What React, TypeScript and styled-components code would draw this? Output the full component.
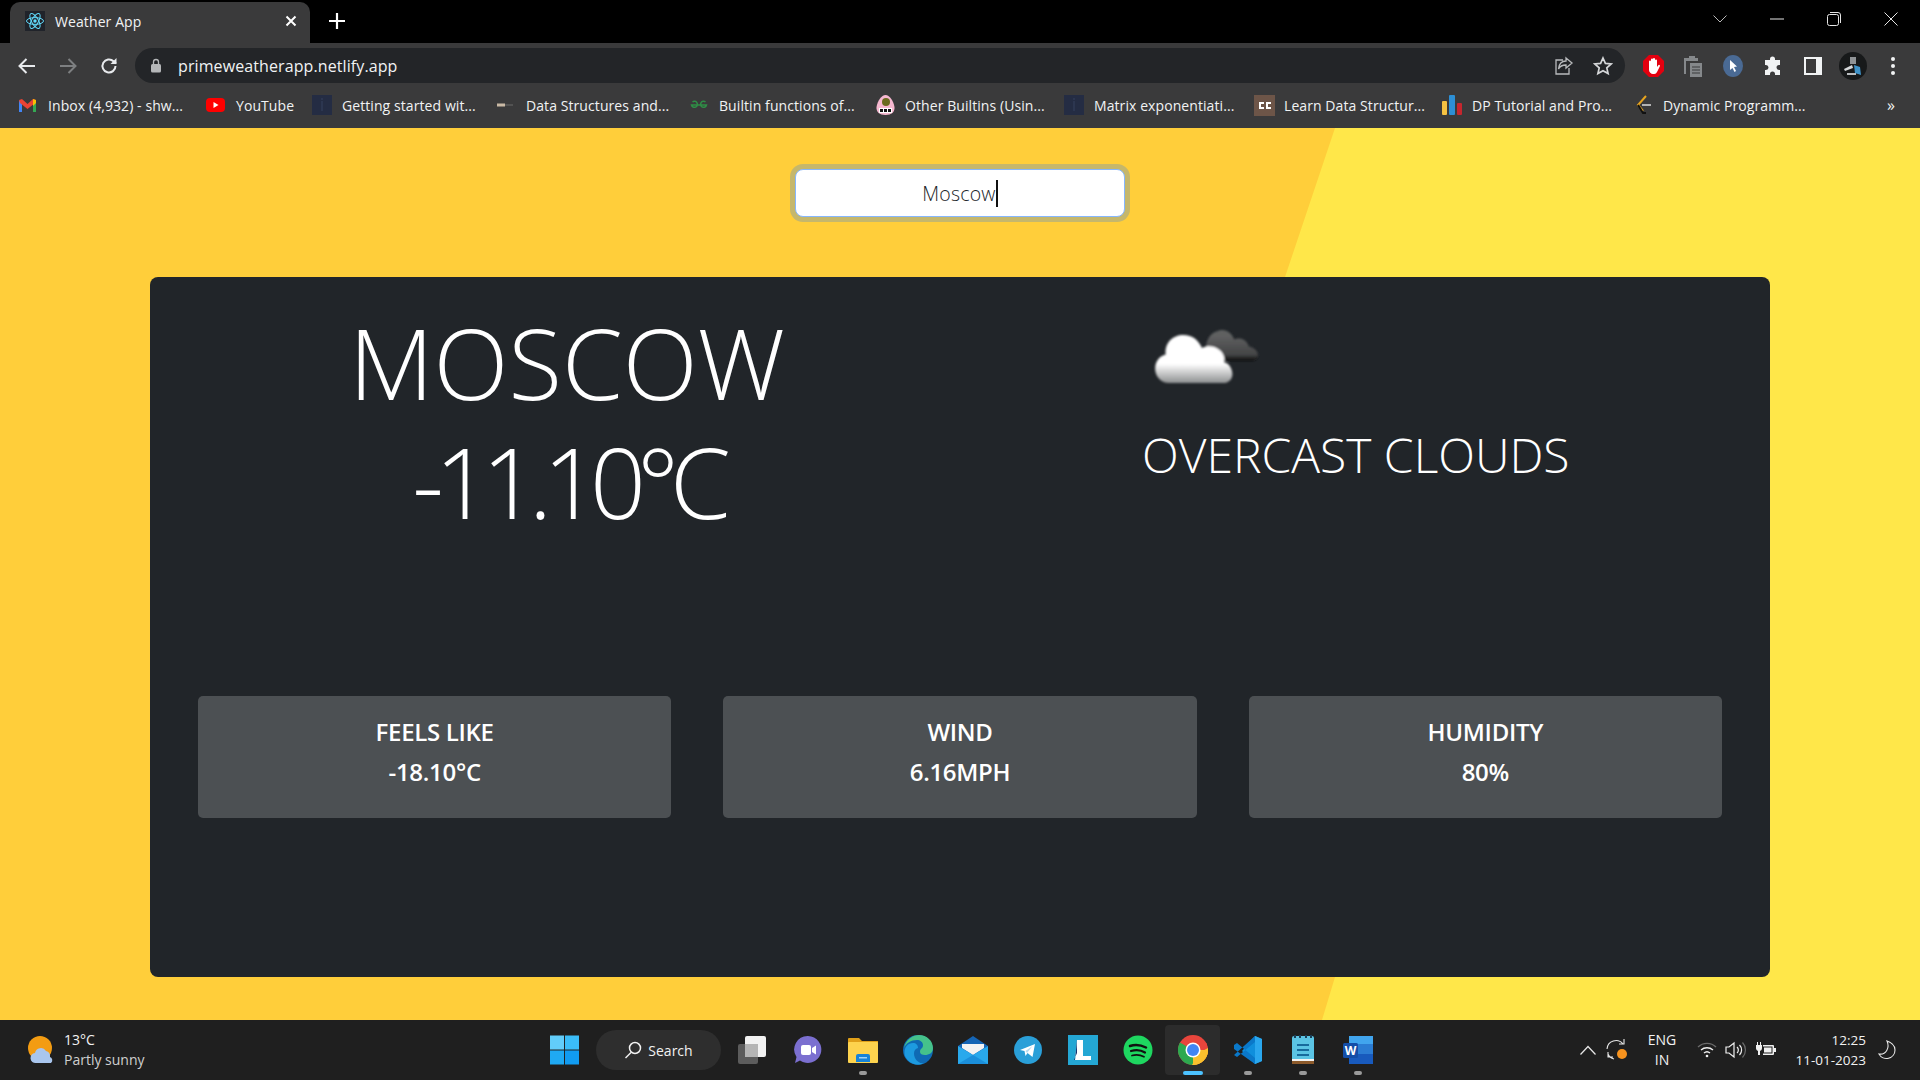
import React from 'react';
import styled, { createGlobalStyle } from 'styled-components';

const GlobalStyle = createGlobalStyle`
	html, body {
		margin: 0;
		padding: 0;
		background: #000;
		overflow: hidden;
	}
	* {
		box-sizing: border-box;
	}
`;

const bookmarks = [
	{ title: 'Inbox (4,932) - shw...', width: 188, icon: 'gmail' },
	{ title: 'YouTube', width: 106, icon: 'youtube' },
	{ title: 'Getting started wit...', width: 184, icon: 'doc' },
	{ title: 'Data Structures and...', width: 193, icon: 'dash' },
	{ title: 'Builtin functions of...', width: 186, icon: 'gfg' },
	{ title: 'Other Builtins (Usin...', width: 189, icon: 'gcc' },
	{ title: 'Matrix exponentiati...', width: 190, icon: 'doc' },
	{ title: 'Learn Data Structur...', width: 188, icon: 'cc' },
	{ title: 'DP Tutorial and Pro...', width: 191, icon: 'bars' },
	{ title: 'Dynamic Programm...', width: 220, icon: 'leet' },
];

const stats = [
	{ label: 'FEELS LIKE', value: '-18.10°C' },
	{ label: 'WIND', value: '6.16MPH' },
	{ label: 'HUMIDITY', value: '80%' },
];

const BookmarkIcon = ({ name }: { name: string }) => {
	switch (name) {
		case 'gmail':
			return (
				<svg width="19" height="16" viewBox="0 0 19 16">
					<path d="M1 3v12h3V6z" fill="#4285f4" />
					<path d="M18 3v12h-3V6z" fill="#34a853" />
					<path d="M1 3l3-1 5.5 5L15 2l3 1-1 3-7.500 6L2 6z" fill="#ea4335" />
					<path d="M15 2l3 1v3l-3 3z" fill="#fbbc04" />
				</svg>
			);
		case 'youtube':
			return (
				<svg width="19" height="16" viewBox="0 0 19 16">
					<rect y="1" width="19" height="14" rx="4" fill="#f00" />
					<path d="M7.500 5v6l5-3z" fill="#fff" />
				</svg>
			);
		case 'doc':
			return (
				<svg width="20" height="20" viewBox="0 0 20 20">
					<rect width="20" height="20" fill="#242c43" />
					<path d="M9 6h2v10H9zM9 3h2v2H9z" fill="#2c3650" />
				</svg>
			);
		case 'dash':
			return (
				<svg width="18" height="8" viewBox="0 0 18 8">
					<rect x="1" y="2.500" width="8" height="3" fill="#c9b9a5" />
					<rect x="9" y="3.500" width="8" height="1" fill="#6a6a6a" />
				</svg>
			);
		case 'gfg':
			return (
				<svg width="20" height="12" viewBox="0 0 20 12" fill="none" stroke="#2f8d46" strokeWidth="1.500">
					<path d="M10 6H2.500a3 3 0 1 0 1-3M10 6h7.500a3 3 0 1 1-1-3" />
				</svg>
			);
		case 'gcc':
			return (
				<svg width="21" height="22" viewBox="0 0 21 22">
					<path d="M10.500 1c4 0 8 6 9 12 .5 5-3 8-9 8s-9.500-3-9-8c1-6 5-12 9-12z" fill="#f6b8d0" />
					<circle cx="11" cy="8" r="4" fill="#6b6a1e" />
					<rect x="4" y="14" width="13" height="5" fill="#fff" />
					<path d="M5 15h3v3H5zM9 15h3v3H9zM13 15h3v3h-3z" fill="#111" />
				</svg>
			);
		case 'cc':
			return (
				<svg width="21" height="21" viewBox="0 0 21 21">
					<rect width="21" height="21" fill="#6d5548" />
					<path d="M10 8H6v5h4M17 8h-4v5h4" stroke="#fff" strokeWidth="2" fill="none" />
				</svg>
			);
		case 'bars':
			return (
				<svg width="20" height="20" viewBox="0 0 20 20">
					<rect y="6" width="5" height="14" rx="1" fill="#f5c242" />
					<rect x="7" width="6" height="20" rx="1" fill="#2d8fd5" />
					<rect x="15" y="8" width="5" height="12" rx="1" fill="#c6262e" />
				</svg>
			);
		default:
			return (
				<svg width="20" height="20" viewBox="0 0 20 20" fill="none" strokeWidth="2">
					<path d="M13 1L5 10l5 6" stroke="#e7a41f" />
					<path d="M5 10l5 8h3" stroke="#111" />
					<path d="M9 10h9" stroke="#b3b3b3" />
				</svg>
			);
	}
};

const TaskIcon = ({ name }: { name: string }) => {
	switch (name) {
		case 'taskview':
			return (
				<svg width="30" height="30" viewBox="0 0 30 30">
					<rect x="0" y="9" width="20" height="20" rx="2" fill="#5c5c5c" />
					<rect x="7" y="1" width="21" height="21" rx="2" fill="#f2f2f2" />
					<rect x="7" y="9" width="13" height="13" fill="#b5b5b5" />
				</svg>
			);
		case 'teams':
			return (
				<svg width="30" height="30" viewBox="0 0 30 30">
					<path d="M15 1a13.500 13.500 0 1 1-8 24.500L2 28l1.500-6A13.500 13.500 0 0 1 15 1z" fill="#7b6fd0" />
					<rect x="8" y="10" width="10" height="10" rx="2" fill="#fff" />
					<path d="M19 13l4-2.500v9L19 17z" fill="#fff" />
				</svg>
			);
		case 'explorer':
			return (
				<svg width="30" height="30" viewBox="0 0 30 30">
					<path d="M0 4a1 1 0 0 1 1-1h10l3 3h16v5H0z" fill="#e0a019" />
					<rect y="7" width="30" height="21" rx="1" fill="#fdd34e" />
					<path d="M8 27v-6a2 2 0 0 1 2-2h10a2 2 0 0 1 2 2v6z" fill="#1683d8" />
					<rect x="11" y="22" width="8" height="1.500" fill="#9fd3f7" />
				</svg>
			);
		case 'edge':
			return (
				<svg width="30" height="30" viewBox="0 0 30 30">
					<circle cx="15" cy="15" r="15" fill="#0f6ab4" />
					<path d="M1 13C3 4 10 0 16 0c8 0 14 6 14 13 0 5-4 7-8 7-3 0-5-1-5-3 0-4 3-3 3-7 0-3-3-5-6-5C8 5 3 8 1 13z" fill="#45c28b" />
					<path d="M2 21C0 14 4 8 10 8c3 0 5 2 5 5-4 1-5 5-3 10 2 4 6 6 9 5-7 4-16 0-19-7z" fill="#1d9be0" />
				</svg>
			);
		case 'mail':
			return (
				<svg width="30" height="30" viewBox="0 0 30 30">
					<path d="M0 11L15 1l15 10v18H0z" fill="#1565b5" />
					<path d="M4 9h22v4l-11 7-11-7z" fill="#f3f3f3" />
					<path d="M0 11l15 9 15-9v18H0z" fill="#29a9ec" />
					<path d="M0 29l15-9 15 9z" fill="#1b8fdb" />
				</svg>
			);
		case 'telegram':
			return (
				<svg width="30" height="30" viewBox="0 0 30 30">
					<circle cx="15" cy="15" r="14" fill="#2a9fd8" />
					<path d="M7 15l15-6-2.500 13-5-4-2 3-1-5z" fill="#fff" />
					<path d="M12.500 16l7-5-5.500 7z" fill="#b9dcf0" />
				</svg>
			);
		case 'linkedin':
			return (
				<svg width="30" height="30" viewBox="0 0 30 30">
					<rect width="30" height="30" fill="#24a7d4" />
					<path d="M9 5h6v16h8v4H7z" fill="#fff" />
					<path d="M9 5v13l-3 7h1z" fill="#14336e" />
				</svg>
			);
		case 'spotify':
			return (
				<svg width="30" height="30" viewBox="0 0 30 30" fill="none" stroke="#111" strokeLinecap="round">
					<circle cx="15" cy="15" r="14.500" fill="#1ed760" stroke="none" />
					<path d="M7 11c6-2 11-1 16 1.500" strokeWidth="2.500" />
					<path d="M8 16c5-1.500 10-1 14 1.500" strokeWidth="2.200" />
					<path d="M9 20.500c4-1 8-.8 12 1.200" strokeWidth="1.800" />
				</svg>
			);
		case 'chrome':
			return (
				<svg width="30" height="30" viewBox="0 0 30 30">
					<circle cx="15" cy="15" r="15" fill="#e8453c" />
					<path d="M15 15L2 7.500A15 15 0 0 0 15 30z" fill="#2da94f" />
					<path d="M15 15h15a15 15 0 0 1-15 15z" fill="#fbc02d" />
					<path d="M15 8h13.500L30 15H15z" fill="#e8453c" />
					<path d="M30 13A15 15 0 0 1 14 30l7-12z" fill="#fbc02d" />
					<circle cx="15" cy="15" r="7.500" fill="#fff" />
					<circle cx="15" cy="15" r="6" fill="#4285f4" />
				</svg>
			);
		case 'vscode':
			return (
				<svg width="30" height="30" viewBox="0 0 30 30">
					<path d="M22 1l7 3v22l-7 3-13-13z" fill="#0f8fdc" />
					<path d="M22 1v28l7-3V4z" fill="#2aa7ee" />
					<path d="M1 10l3-2 18 15v6L1 14zM1 20l3 2L22 7V1z" fill="#0a78c9" />
				</svg>
			);
		case 'notepad':
			return (
				<svg width="24" height="30" viewBox="0 0 24 30">
					<rect x="1" y="1" width="22" height="28" rx="2" fill="#5bc4e4" />
					<rect x="1" y="26" width="22" height="3" fill="#8c5a2b" />
					<rect x="1" y="24" width="22" height="2" fill="#f3f3f3" />
					<path d="M6 9h12v2H6zM6 14h12v2H6zM6 19h12v2H6z" fill="#176a9c" />
					<path d="M3 0h2v3H3zM8 0h2v3H8zM14 0h2v3h-2zM19 0h2v3h-2z" fill="#1a3f58" />
				</svg>
			);
		default:
			return (
				<svg width="30" height="30" viewBox="0 0 30 30">
					<rect x="6" y="1" width="24" height="28" rx="2" fill="#2b7cd3" />
					<rect x="6" y="1" width="24" height="8" fill="#41a5ee" />
					<rect x="6" y="19" width="24" height="10" fill="#185abd" />
					<rect y="8" width="15" height="15" rx="1.500" fill="#144ea8" />
					<text x="7.500" y="20" textAnchor="middle" fontSize="12" fontWeight="700" fontFamily="Open Sans, sans-serif" fill="#fff">W</text>
				</svg>
			);
	}
};

const dockIcons = [
	{ name: 'taskview', dot: 'none' },
	{ name: 'teams', dot: 'none' },
	{ name: 'explorer', dot: 'idle' },
	{ name: 'edge', dot: 'none' },
	{ name: 'mail', dot: 'none' },
	{ name: 'telegram', dot: 'none' },
	{ name: 'linkedin', dot: 'none' },
	{ name: 'spotify', dot: 'none' },
	{ name: 'chrome', dot: 'active' },
	{ name: 'vscode', dot: 'idle' },
	{ name: 'notepad', dot: 'idle' },
	{ name: 'word', dot: 'idle' },
];

const App = () => {
	return (
		<Screen>
			<GlobalStyle />
			<TabStrip>
				<Tab>
					<Favicon>
						<svg width="20" height="20" viewBox="0 0 20 20" fill="none" stroke="#61dafb" strokeWidth="1">
							<ellipse cx="10" cy="10" rx="8.500" ry="3.400" />
							<ellipse cx="10" cy="10" rx="8.500" ry="3.400" transform="rotate(60 10 10)" />
							<ellipse cx="10" cy="10" rx="8.500" ry="3.400" transform="rotate(120 10 10)" />
							<circle cx="10" cy="10" r="1.700" fill="#61dafb" stroke="none" />
						</svg>
					</Favicon>
					<TabTitle>Weather App</TabTitle>
					<svg width="12" height="12" viewBox="0 0 12 12" stroke="#fff" strokeWidth="2">
						<path d="M1.500 1.500l9 9M10.500 1.500l-9 9" />
					</svg>
				</Tab>
				<NewTab>
					<svg width="16" height="16" viewBox="0 0 16 16" stroke="#fff" strokeWidth="2.200">
						<path d="M8 0v16M0 8h16" />
					</svg>
				</NewTab>
				<WindowControls>
					<WindowButton>
						<svg width="14" height="8" viewBox="0 0 14 8" fill="none" stroke="#b8b8b8">
							<path d="M.5.5L7 7l6.500-6.500" />
						</svg>
					</WindowButton>
					<WindowButton>
						<svg width="14" height="2" viewBox="0 0 14 2" stroke="#e6e6e6">
							<path d="M0 1h14" />
						</svg>
					</WindowButton>
					<WindowButton>
						<svg width="14" height="14" viewBox="0 0 14 14" fill="none" stroke="#e6e6e6">
							<rect x=".5" y="2.500" width="11" height="11" rx="2" />
							<path d="M3 .5h8a2.500 2.500 0 0 1 2.500 2.500v8" />
						</svg>
					</WindowButton>
					<WindowButton>
						<svg width="14" height="14" viewBox="0 0 14 14" stroke="#e6e6e6">
							<path d="M.5.5l13 13M13.500.5l-13 13" />
						</svg>
					</WindowButton>
				</WindowControls>
			</TabStrip>

			<Toolbar>
				<NavButton>
					<svg width="18" height="16" viewBox="0 0 18 16" fill="none" stroke="#e8eaed" strokeWidth="2">
						<path d="M17 8H2M8.500 1L1.500 8l7 7" />
					</svg>
				</NavButton>
				<NavButton>
					<svg width="18" height="16" viewBox="0 0 18 16" fill="none" stroke="#7d7f81" strokeWidth="2">
						<path d="M1 8h15M9.500 1l7 7-7 7" />
					</svg>
				</NavButton>
				<NavButton>
					<svg width="18" height="18" viewBox="0 0 18 18" fill="none" stroke="#e8eaed" strokeWidth="2">
						<path d="M15.500 9a6.500 6.500 0 1 1-2-4.700L16 6.500" />
						<path d="M16.500 1v6h-6" fill="#e8eaed" stroke="none" />
					</svg>
				</NavButton>
				<Omnibox>
					<svg width="12" height="15" viewBox="0 0 12 15" fill="#b5b7b9">
						<rect x="1" y="6" width="10" height="8.500" rx="1.500" />
						<path d="M3.500 6V4a2.500 2.500 0 0 1 5 0v2" fill="none" stroke="#b5b7b9" strokeWidth="1.300" />
					</svg>
					<Url>primeweatherapp.netlify.app</Url>
					<OmniboxActions>
						<svg width="20" height="20" viewBox="0 0 20 20" fill="none" stroke="#b9bbbd" strokeWidth="1.300">
							<path d="M9 4H2v14h13v-6" />
							<path d="M12 2l6 5-6 5V9c-4 0-6 1-7.500 4C5 8 8 5 12 5z" />
						</svg>
						<svg width="20" height="20" viewBox="0 0 20 20" fill="none" stroke="#d5d7d9" strokeWidth="1.700">
							<path d="M10 2l2.400 5.400 5.800.6-4.400 3.900 1.300 5.700L10 14.700l-5.100 2.900 1.300-5.700L1.800 8l5.800-.6z" />
						</svg>
					</OmniboxActions>
				</Omnibox>
				<Extensions>
					<ExtensionSlot>
						<svg width="21" height="22" viewBox="0 0 21 22">
							<path d="M6 0h9l6 6v10l-6 6H6l-6-6V6z" fill="#e3000f" />
							<path d="M6 12V6.500a1 1 0 0 1 2 0V11V4.500a1 1 0 0 1 2 0V11V4a1 1 0 0 1 2 0v7V5.500a1 1 0 0 1 2 0V12l1.500-2a1 1 0 0 1 1.500 1l-3 6a3 3 0 0 1-3 2H10c-2 0-4-2-4-4z" fill="#fff" />
						</svg>
					</ExtensionSlot>
					<ExtensionSlot>
						<svg width="18" height="22" viewBox="0 0 18 22" fill="#85888b">
							<path d="M2 3h3V1h6v2h3v3H2zM0 3h2v16H0z" />
							<path d="M6 8h12v14H6z" />
							<path d="M8 12h8M8 15h8M8 18h8" stroke="#3a3a3c" strokeWidth="1.200" />
						</svg>
					</ExtensionSlot>
					<ExtensionSlot>
						<svg width="20" height="22" viewBox="0 0 20 22">
							<ellipse cx="10" cy="11" rx="10" ry="11" fill="#4a6a94" />
							<path d="M7 5l7 6.500-3 .5 2 4-1.500 1-2-4-2.500 2z" fill="#fff" />
						</svg>
					</ExtensionSlot>
					<ExtensionSlot>
						<svg width="20" height="20" viewBox="0 0 20 20" fill="#f1f3f4">
							<path d="M7 3a2.500 2.500 0 0 1 5 0v1h5v5h-1a2.500 2.500 0 0 0 0 5h1v5h-5v-1a2.500 2.500 0 0 0-5 0v1H2v-5h1a2.500 2.500 0 0 0 0-5H2V4h5z" />
						</svg>
					</ExtensionSlot>
					<ExtensionSlot>
						<svg width="18" height="18" viewBox="0 0 18 18" fill="none" stroke="#f1f3f4" strokeWidth="2">
							<rect x="1" y="1" width="16" height="16" />
							<rect x="12" y="1" width="5" height="16" fill="#f1f3f4" stroke="none" />
						</svg>
					</ExtensionSlot>
					<ExtensionSlot>
						<svg width="28" height="28" viewBox="0 0 28 28">
							<circle cx="14" cy="14" r="14" fill="#17191a" />
							<path d="M11 5h6v7h-6z" fill="#8f9396" />
							<path d="M5 17l8-4 1 3-8 3z" fill="#d5d8da" />
							<path d="M15 13l6 2 1 8-6-2z" fill="#3f93c9" />
							<path d="M8 21h9v2H8z" fill="#b9bcbf" />
						</svg>
					</ExtensionSlot>
					<ExtensionSlot>
						<svg width="4" height="18" viewBox="0 0 4 18" fill="#f1f3f4">
							<circle cx="2" cy="2" r="2" />
							<circle cx="2" cy="9" r="2" />
							<circle cx="2" cy="16" r="2" />
						</svg>
					</ExtensionSlot>
				</Extensions>
			</Toolbar>

			<BookmarkBar>
				{bookmarks.map((mark) => (
					<Bookmark key={mark.title} $width={mark.width}>
						<BookmarkGlyph>
							<BookmarkIcon name={mark.icon} />
						</BookmarkGlyph>
						<span>{mark.title}</span>
					</Bookmark>
				))}
				<More>»</More>
			</BookmarkBar>

			<Page>
				<SearchBox>
					Moscow
					<Caret />
				</SearchBox>
				<WeatherCard>
					<TopRow>
						<CityColumn>
							<BigText>MOSCOW</BigText>
							<BigText $tight>-11.10°C</BigText>
						</CityColumn>
						<ConditionColumn>
							<svg width="110" height="62" viewBox="0 0 110 62">
								<defs>
									<filter id="soft">
										<feGaussianBlur stdDeviation="1.100" />
									</filter>
									<linearGradient id="white" x1="0" y1="0" x2="0" y2="1">
										<stop offset="0.6" stopColor="#fff" />
										<stop offset="1" stopColor="#8d8f90" />
									</linearGradient>
									<linearGradient id="grey" x1="0" y1="0" x2="0" y2="1">
										<stop offset="0.2" stopColor="#5f6061" />
										<stop offset="0.8" stopColor="#444546" />
										<stop offset="1" stopColor="#0c0c0c" />
									</linearGradient>
								</defs>
								<g filter="url(#soft)">
									<path
										d="M58 37c-3-8 0-20 9-22 6-3 13 1 15 7 5-2 11 0 13 6 5 1 8 4 8 7 0 3-2 5-5 5H70z"
										fill="url(#grey)"
										transform="translate(-8.500 -11.500) scale(1.130 1.180)"
									/>
									<path
										d="M13 57C5 57 1 51 1 46c0-6 4-10 9-11-1-9 6-15 15-15 8 0 13 4 16 10 4-2 10-2 14 1 4 2 6 7 5 10 5 1 7 6 7 9 0 4-3 7-8 7z"
										fill="url(#white)"
										transform="translate(4 -16) scale(1.170 1.300)"
									/>
								</g>
							</svg>
							<Condition>OVERCAST CLOUDS</Condition>
						</ConditionColumn>
					</TopRow>
					<StatRow>
						{stats.map((stat) => (
							<StatCard key={stat.label}>
								<StatText>{stat.label}</StatText>
								<StatText>{stat.value}</StatText>
							</StatCard>
						))}
					</StatRow>
				</WeatherCard>
			</Page>

			<Taskbar>
				<WeatherWidget>
					<svg width="28" height="28" viewBox="0 0 28 28">
						<ellipse cx="12" cy="12" rx="12" ry="12" fill="#f39c12" />
						<path d="M8 27a5 5 0 0 1-1-10 6 6 0 0 1 11-2 5.500 5.500 0 0 1 4 6 3.500 3.500 0 0 1 1 6z" fill="#a9c6ee" />
					</svg>
					<WidgetText>
						<Temperature>13°C</Temperature>
						<Forecast>Partly sunny</Forecast>
					</WidgetText>
				</WeatherWidget>
				<StartButton>
					<svg width="29" height="30" viewBox="0 0 30 30">
						<rect width="14.500" height="14.500" fill="#62cdfa" />
						<rect x="15.500" width="14.500" height="14.500" fill="#3bbdf8" />
						<rect y="15.500" width="14.500" height="14.500" fill="#1fa9f3" />
						<rect x="15.500" y="15.500" width="14.500" height="14.500" fill="#119bf1" />
					</svg>
				</StartButton>
				<SearchPill>
					<svg width="18" height="18" viewBox="0 0 18 18" fill="none" stroke="#f2f2f2" strokeWidth="1.500">
						<circle cx="11" cy="7" r="5.500" />
						<path d="M7 11.500L1.500 17" />
					</svg>
					Search
				</SearchPill>
				<Dock>
					{dockIcons.map((icon) => (
						<DockItem key={icon.name} $active={icon.dot === 'active'}>
							<TaskIcon name={icon.name} />
							{icon.dot !== 'none' && <DockDot $active={icon.dot === 'active'} />}
						</DockItem>
					))}
				</Dock>
				<Tray>
					<TraySlot $width={32}>
						<svg width="16" height="10" viewBox="0 0 16 10" fill="none" stroke="#e8e8e8" strokeWidth="1.200">
							<path d="M.5 9.500L8 1.500l7.500 8" />
						</svg>
					</TraySlot>
					<TraySlot $width={28}>
						<svg width="24" height="24" viewBox="0 0 24 24" fill="none" stroke="#e8e8e8" strokeWidth="1.100">
							<path d="M1 11a9 9 0 0 1 16-5M18 1v5h-5" />
							<path d="M2 16a9 9 0 0 0 6 5M2 14v5h5" />
							<circle cx="16" cy="16" r="5" fill="#f7931e" stroke="none" />
						</svg>
					</TraySlot>
					<Language>
						<span>ENG</span>
						<span>IN</span>
					</Language>
					<TraySlot $width={29}>
						<svg width="20" height="16" viewBox="0 0 20 16" fill="none" stroke="#f0f0f0" strokeWidth="1.400">
							<path d="M1 5a13 13 0 0 1 18 0" stroke="#6b6b6b" />
							<path d="M4 8a9 9 0 0 1 12 0" />
							<path d="M7 11a4.500 4.500 0 0 1 6 0" />
							<circle cx="10" cy="14" r="1.300" fill="#f0f0f0" stroke="none" />
						</svg>
					</TraySlot>
					<TraySlot $width={29}>
						<svg width="22" height="18" viewBox="0 0 22 18" fill="none" stroke="#f0f0f0" strokeWidth="1.200">
							<path d="M1 6v6h3l5 4V2L4 6z" />
							<path d="M12 6a4 4 0 0 1 0 6M14.500 4a7 7 0 0 1 0 10" />
							<path d="M17.500 1.500a11 11 0 0 1 0 15" stroke="#6b6b6b" />
						</svg>
					</TraySlot>
					<TraySlot $width={31}>
						<svg width="20" height="16" viewBox="0 0 20 16" fill="#f0f0f0">
							<path d="M1 0h1v3h2V0h1v3h1v3a3 3 0 0 1-2 3v4H2V9a3 3 0 0 1-2-3V3h1z" />
							<path d="M7 3h10a1 1 0 0 1 1 1v8a1 1 0 0 1-1 1H7v-1.500h9.500v-7H7z" />
							<rect x="8" y="5.500" width="7.500" height="5" />
							<rect x="18" y="6" width="2" height="4" />
						</svg>
					</TraySlot>
					<Clock>
						<span>12:25</span>
						<span>11-01-2023</span>
					</Clock>
					<MoonSlot>
						<svg width="18" height="20" viewBox="0 0 18 20" fill="none" stroke="#e8e8e8" strokeWidth="1.100">
							<path d="M9 1c3 1 8 4 8 9a8.500 8.500 0 0 1-16 4c7 1 11-6 8-13z" />
						</svg>
					</MoonSlot>
				</Tray>
			</Taskbar>
		</Screen>
	);
};

export default App;

const chromeFont = `"Open Sans", "Noto Sans", sans-serif`;

const Screen = styled.div`
	display: flex;
	flex-direction: column;
	width: 1920px;
	height: 1080px;
	overflow: hidden;
	font-family: ${chromeFont};
`;

const TabStrip = styled.div`
	display: flex;
	align-items: flex-end;
	height: 43px;
	padding-left: 10px;
	background: #000;
`;

const Tab = styled.div`
	display: flex;
	align-items: center;
	width: 300px;
	height: 41px;
	padding: 0 13px 3px 15px;
	background: #3a3a3b;
	border-radius: 10px 10px 0 0;
	svg {
		flex: none;
	}
`;

const Favicon = styled.div`
	display: flex;
	align-items: center;
	justify-content: center;
	width: 20px;
	height: 20px;
	background: #20232a;
`;

const TabTitle = styled.div`
	flex: 1;
	margin-left: 10px;
	color: #f1f3f4;
	font-size: 14px;
	letter-spacing: 0.1px;
`;

const NewTab = styled.div`
	display: flex;
	align-items: center;
	justify-content: center;
	width: 16px;
	height: 43px;
	margin-left: 19px;
	padding-bottom: 2px;
`;

const WindowControls = styled.div`
	display: flex;
	align-items: center;
	height: 43px;
	margin-left: auto;
	padding-right: 1px;
`;

const WindowButton = styled.div`
	display: flex;
	align-items: center;
	justify-content: center;
	width: 57px;
	height: 43px;
	padding-bottom: 5px;
`;

const Toolbar = styled.div`
	display: flex;
	align-items: center;
	height: 40px;
	padding: 5px 0 0 7px;
	background: #3a3a3b;
`;

const NavButton = styled.div`
	display: flex;
	align-items: center;
	justify-content: center;
	width: 40px;
	height: 35px;
	margin-right: 1px;
`;

const Omnibox = styled.div`
	display: flex;
	align-items: center;
	width: 1490px;
	height: 35px;
	margin-left: 5px;
	padding: 0 12px 0 15px;
	background: #232528;
	border-radius: 18px;
`;

const Url = styled.div`
	margin-left: 16px;
	color: #f1f3f4;
	font-size: 16px;
	letter-spacing: 0.1px;
`;

const OmniboxActions = styled.div`
	display: flex;
	align-items: center;
	gap: 19px;
	margin-left: auto;
`;

const Extensions = styled.div`
	display: flex;
	align-items: center;
	padding-left: 8px;
`;

const ExtensionSlot = styled.div`
	display: flex;
	align-items: center;
	justify-content: center;
	width: 40px;
	height: 35px;
`;

const BookmarkBar = styled.div`
	display: flex;
	align-items: center;
	height: 45px;
	padding: 0 0 1px 18px;
	background: #3a3a3b;
`;

const Bookmark = styled.div<{ $width: number }>`
	display: flex;
	align-items: center;
	width: ${(props) => props.$width}px;
	color: #f1f3f4;
	font-size: 14px;
	letter-spacing: 0.08px;
	white-space: nowrap;
`;

const BookmarkGlyph = styled.div`
	display: flex;
	align-items: center;
	justify-content: flex-start;
	width: 30px;
	flex: none;
`;

const More = styled.div`
	margin-left: 34px;
	color: #f1f3f4;
	font-size: 16px;
`;

const Page = styled.main`
	position: relative;
	display: flex;
	flex-direction: column;
	align-items: center;
	height: 892px;
	padding-top: 41px;
	background: #ffce3a;
	&::before {
		content: '';
		position: absolute;
		inset: 0;
		background: #ffe749;
		clip-path: polygon(1335px 0, 1920px 0, 1920px 892px, 1322px 892px, 1335px 849px, 1285px 149px);
	}
`;

const SearchBox = styled.div`
	position: relative;
	display: flex;
	align-items: center;
	justify-content: center;
	width: 330px;
	height: 48px;
	background: #fff;
	border: 1px solid #86b7fe;
	border-radius: 8px;
	box-shadow: 0 0 0 5px #c5b76c;
	color: #212529;
	font-family: "Open Sans", sans-serif;
	font-size: 19.5px;
	font-weight: 300;
	letter-spacing: 0.2px;
`;

const Caret = styled.span`
	display: inline-block;
	width: 2px;
	height: 27px;
	background: #111;
`;

const WeatherCard = styled.section`
	position: relative;
	display: flex;
	flex-direction: column;
	width: 1620px;
	height: 700px;
	margin-top: 60px;
	padding: 26px 48px 0;
	background: #212529;
	border-radius: 8px;
	color: #fff;
`;

const TopRow = styled.div`
	display: grid;
	grid-template-columns: 738px 1fr;
	height: 393px;
`;

const CityColumn = styled.div`
	display: flex;
	flex-direction: column;
	align-items: center;
`;

const BigText = styled.div<{ $tight?: boolean }>`
	font-family: "Open Sans", sans-serif;
	font-size: 98px;
	font-weight: 300;
	line-height: 119px;
	letter-spacing: ${(props) => (props.$tight ? '-9px' : '0')};
	white-space: nowrap;
`;

const ConditionColumn = styled.div`
	display: flex;
	flex-direction: column;
	padding: 22px 0 0 214px;
`;

const Condition = styled.div`
	margin: 39px 0 0 -8px;
	font-family: "Open Sans", sans-serif;
	font-size: 48px;
	font-weight: 300;
	line-height: 58px;
	white-space: nowrap;
`;

const StatRow = styled.div`
	display: grid;
	grid-template-columns: repeat(3, 1fr);
	gap: 52px;
`;

const StatCard = styled.div`
	display: flex;
	flex-direction: column;
	align-items: center;
	justify-content: center;
	gap: 8px;
	height: 122px;
	padding-bottom: 10px;
	background: #4c5053;
	border-radius: 5px;
`;

const StatText = styled.div`
	font-family: "Open Sans", sans-serif;
	font-size: 24px;
	font-weight: 600;
	line-height: 32px;
	letter-spacing: -0.3px;
`;

const Taskbar = styled.footer`
	display: flex;
	align-items: center;
	height: 60px;
	background: #1f1f1f;
	color: #f2f2f2;
`;

const WeatherWidget = styled.div`
	display: flex;
	align-items: center;
	gap: 8px;
	width: 550px;
	padding-left: 28px;
`;

const WidgetText = styled.div`
	display: flex;
	flex-direction: column;
`;

const Temperature = styled.div`
	font-size: 14px;
	line-height: 20px;
`;

const Forecast = styled.div`
	color: #cfcfcf;
	font-size: 14px;
	line-height: 20px;
`;

const StartButton = styled.div`
	display: flex;
	align-items: center;
	width: 46px;
`;

const SearchPill = styled.div`
	display: flex;
	align-items: center;
	justify-content: center;
	gap: 6px;
	width: 125px;
	height: 40px;
	background: #2e2e2e;
	border-radius: 20px;
	font-size: 14px;
`;

const Dock = styled.div`
	display: flex;
	align-items: center;
	margin-left: 4px;
`;

const DockItem = styled.div<{ $active: boolean }>`
	position: relative;
	display: flex;
	align-items: center;
	justify-content: center;
	width: 55px;
	height: 50px;
	border-radius: 4px;
	background: ${(props) => (props.$active ? '#2c2c2c' : 'transparent')};
`;

const DockDot = styled.span<{ $active: boolean }>`
	position: absolute;
	bottom: 0;
	left: 50%;
	width: ${(props) => (props.$active ? 20 : 8)}px;
	height: 4px;
	border-radius: 2px;
	background: ${(props) => (props.$active ? '#4cc2ff' : '#9a9a9a')};
	transform: translateX(-50%);
`;

const Tray = styled.div`
	display: flex;
	align-items: center;
	margin-left: auto;
	padding-right: 12px;
`;

const TraySlot = styled.div<{ $width: number }>`
	display: flex;
	align-items: center;
	justify-content: center;
	width: ${(props) => props.$width}px;
`;

const Language = styled.div`
	display: flex;
	flex-direction: column;
	align-items: center;
	width: 60px;
	font-size: 14px;
	line-height: 20px;
`;

const Clock = styled.div`
	display: flex;
	flex-direction: column;
	align-items: flex-end;
	width: 85px;
	font-size: 13.5px;
	line-height: 20px;
`;

const MoonSlot = styled.div`
	display: flex;
	justify-content: center;
	width: 42px;
`;
